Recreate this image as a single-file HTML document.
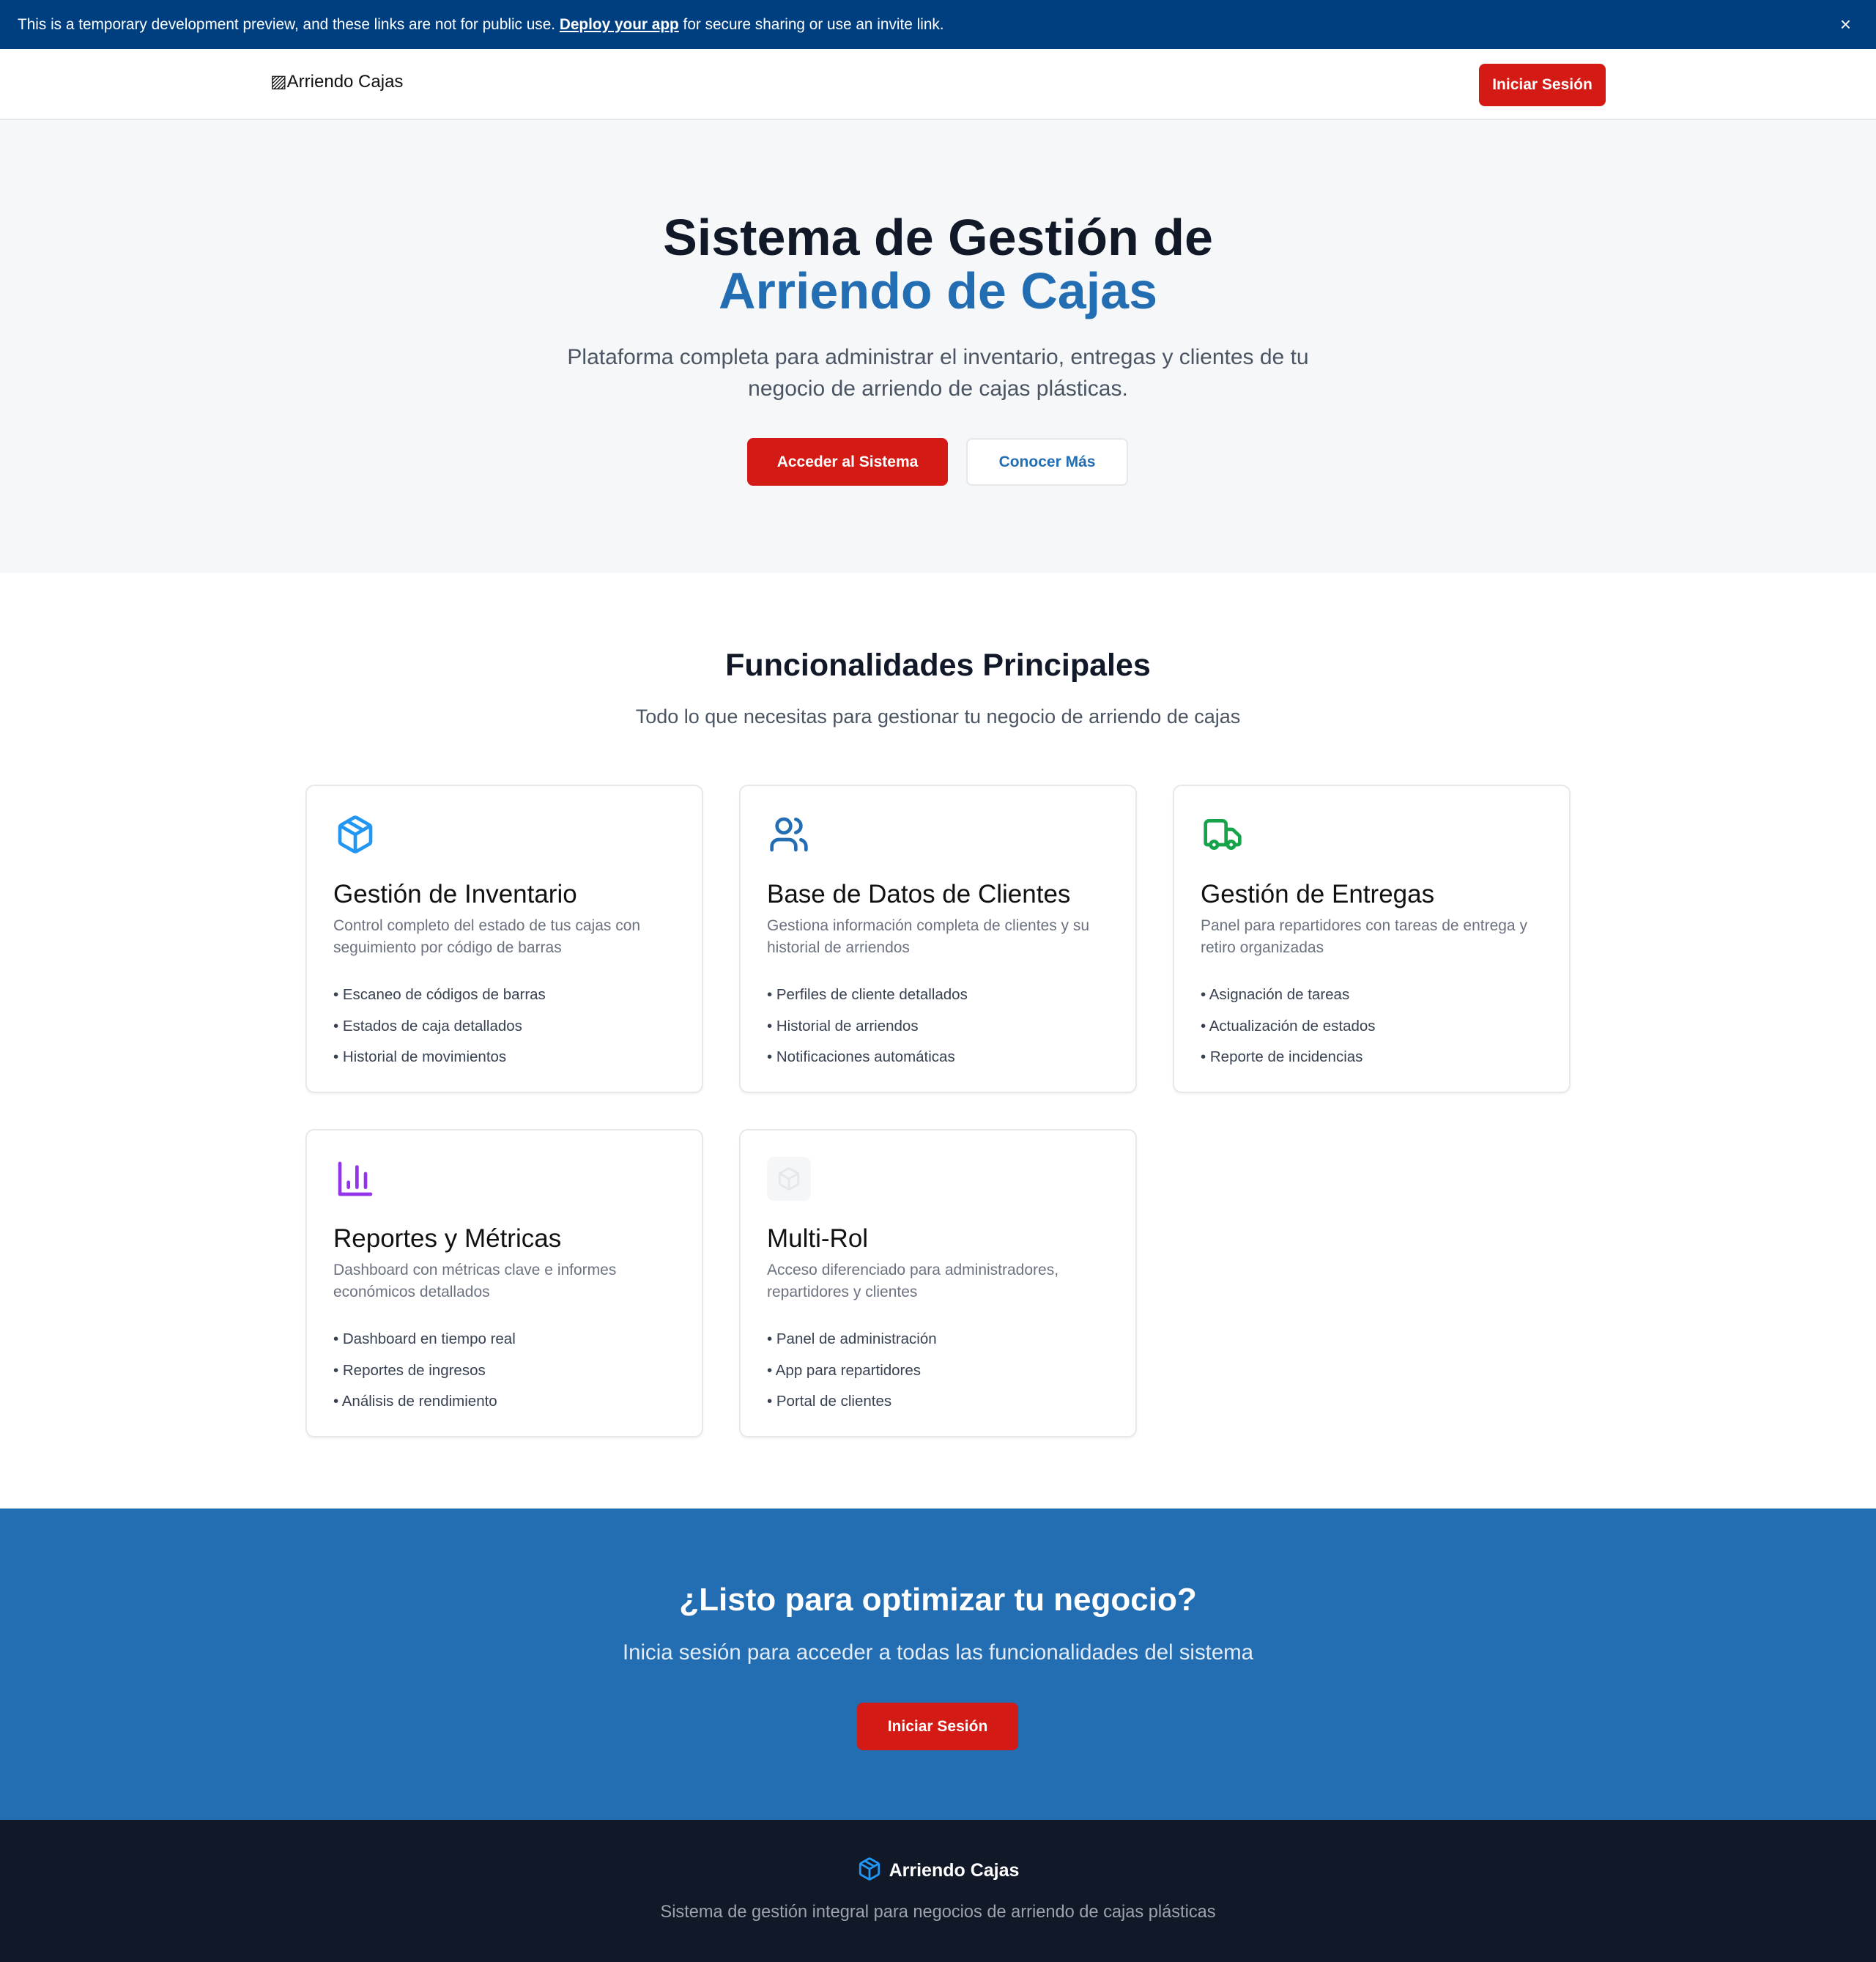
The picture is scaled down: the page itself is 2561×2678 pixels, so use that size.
<!DOCTYPE html>
<html><head><meta charset="utf-8">
<style>
*{box-sizing:border-box;margin:0;padding:0}
body{width:2561px;height:2678px;font-family:"Liberation Sans",sans-serif;background:#fff;color:#111827;position:relative;overflow:hidden}
.abs{position:absolute}
.banner{left:0;top:0;width:2561px;height:67px;background:#003f7f;color:#fff;font-size:20.8px;line-height:67px;padding-left:24px}
.banner u{font-weight:bold}
.nav{left:0;top:67px;width:2561px;height:97px;background:#fff;border-bottom:2px solid #e5e7eb;box-shadow:0 2px 4px rgba(0,0,0,.04)}
.btn{position:absolute;border-radius:8px;display:flex;align-items:center;justify-content:center;font-weight:bold}
.red{background:#d41a14;color:#fff}
.hero{left:0;top:164px;width:2561px;height:618px;background:#f6f7f9}
.c{text-align:center;left:0;width:2561px}
.card{position:absolute;width:543px;height:421px;border:2px solid #e7e8ea;border-radius:12px;box-shadow:0 2px 3px rgba(0,0,0,.05);background:#fff}
.card svg{position:absolute;left:38px;top:38px}
.card h3{position:absolute;left:36px;top:128px;font-size:35px;font-weight:normal;color:#111}
.card p{position:absolute;left:36px;top:176px;width:470px;font-size:21px;line-height:30px;color:#6b7280}
.card ul{position:absolute;left:36px;top:264px;list-style:none;font-size:20.5px;line-height:42.5px;color:#374151}
</style></head><body>
<div class="abs banner">This is a temporary development preview, and these links are not for public use. <u>Deploy your app</u> for secure sharing or use an invite link.<span style="position:absolute;right:34px;top:0;font-size:26px">×</span></div>
<div class="abs nav">
<div style="position:absolute;left:369px;top:30px;font-size:24px;color:#111">▨Arriendo Cajas</div>
<div class="btn red" style="left:2019px;top:20px;width:173px;height:58px;font-size:21px">Iniciar Sesión</div>
</div>
<div class="abs hero">
<div class="abs c" style="top:124px;font-size:70px;font-weight:bold;line-height:73px">Sistema de Gestión de<br><span style="color:#236db3">Arriendo de Cajas</span></div>
<div class="abs c" style="top:302px;font-size:30px;line-height:43px;color:#4b5563">Plataforma completa para administrar el inventario, entregas y clientes de tu<br>negocio de arriendo de cajas plásticas.</div>
<div class="btn red" style="left:1020px;top:434px;width:274px;height:65px;font-size:21px">Acceder al Sistema</div>
<div class="btn" style="left:1319px;top:434px;width:221px;height:65px;font-size:21px;background:#fff;color:#236db3;border:2px solid #e5e7eb">Conocer Más</div>
</div>
<div class="abs c" style="top:884px;font-size:43px;font-weight:bold">Funcionalidades Principales</div>
<div class="abs c" style="top:963px;font-size:27px;color:#4b5563">Todo lo que necesitas para gestionar tu negocio de arriendo de cajas</div>

<div class="card" style="left:417px;top:1071px">
<svg width="56" height="56" viewBox="0 0 24 24" fill="none" stroke="#2196f3" stroke-width="2" stroke-linecap="round" stroke-linejoin="round"><path d="M11 21.73a2 2 0 0 0 2 0l7-4A2 2 0 0 0 21 16V8a2 2 0 0 0-1-1.73l-7-4a2 2 0 0 0-2 0l-7 4A2 2 0 0 0 3 8v8a2 2 0 0 0 1 1.73z"/><path d="M12 22V12"/><path d="M3.29 7 12 12l8.71-5"/><path d="m7.5 4.27 9 5.15"/></svg>
<h3>Gestión de Inventario</h3><p>Control completo del estado de tus cajas con seguimiento por código de barras</p>
<ul><li>• Escaneo de códigos de barras</li><li>• Estados de caja detallados</li><li>• Historial de movimientos</li></ul></div>

<div class="card" style="left:1009px;top:1071px">
<svg width="56" height="56" viewBox="0 0 24 24" fill="none" stroke="#236db3" stroke-width="2" stroke-linecap="round" stroke-linejoin="round"><path d="M16 21v-2a4 4 0 0 0-4-4H6a4 4 0 0 0-4 4v2"/><circle cx="9" cy="7" r="4"/><path d="M22 21v-2a4 4 0 0 0-3-3.87"/><path d="M16 3.13a4 4 0 0 1 0 7.75"/></svg>
<h3>Base de Datos de Clientes</h3><p>Gestiona información completa de clientes y su historial de arriendos</p>
<ul><li>• Perfiles de cliente detallados</li><li>• Historial de arriendos</li><li>• Notificaciones automáticas</li></ul></div>

<div class="card" style="left:1601px;top:1071px">
<svg width="56" height="56" viewBox="0 0 24 24" fill="none" stroke="#16a34a" stroke-width="2" stroke-linecap="round" stroke-linejoin="round"><path d="M14 18V6a2 2 0 0 0-2-2H4a2 2 0 0 0-2 2v11a1 1 0 0 0 1 1h2"/><path d="M15 18H9"/><path d="M19 18h2a1 1 0 0 0 1-1v-3.65a1 1 0 0 0-.22-.62L18.3 9.38a1 1 0 0 0-.78-.38H14"/><circle cx="17" cy="18" r="2"/><circle cx="7" cy="18" r="2"/></svg>
<h3>Gestión de Entregas</h3><p>Panel para repartidores con tareas de entrega y retiro organizadas</p>
<ul><li>• Asignación de tareas</li><li>• Actualización de estados</li><li>• Reporte de incidencias</li></ul></div>

<div class="card" style="left:417px;top:1541px">
<svg width="56" height="56" viewBox="0 0 24 24" fill="none" stroke="#9333ea" stroke-width="2" stroke-linecap="round" stroke-linejoin="round"><path d="M3 3v18h18"/><path d="M18 17V9"/><path d="M13 17V5"/><path d="M8 17v-3"/></svg>
<h3>Reportes y Métricas</h3><p>Dashboard con métricas clave e informes económicos detallados</p>
<ul><li>• Dashboard en tiempo real</li><li>• Reportes de ingresos</li><li>• Análisis de rendimiento</li></ul></div>

<div class="card" style="left:1009px;top:1541px">
<div style="position:absolute;left:36px;top:36px;width:60px;height:60px;border-radius:10px;background:#f5f6f7"></div>
<svg width="34" height="34" viewBox="0 0 24 24" fill="none" stroke="#e5e7eb" stroke-width="2" style="left:49px;top:49px"><path d="M11 21.73a2 2 0 0 0 2 0l7-4A2 2 0 0 0 21 16V8a2 2 0 0 0-1-1.73l-7-4a2 2 0 0 0-2 0l-7 4A2 2 0 0 0 3 8v8a2 2 0 0 0 1 1.73z"/><path d="M12 22V12"/><path d="M3.29 7 12 12l8.71-5"/></svg>
<h3>Multi-Rol</h3><p>Acceso diferenciado para administradores, repartidores y clientes</p>
<ul><li>• Panel de administración</li><li>• App para repartidores</li><li>• Portal de clientes</li></ul></div>

<div class="abs" style="left:0;top:2059px;width:2561px;height:425px;background:#236db3">
<div class="abs c" style="top:100px;font-size:44px;font-weight:bold;color:#fff">¿Listo para optimizar tu negocio?</div>
<div class="abs c" style="top:180px;font-size:29.4px;color:#e0ecf8">Inicia sesión para acceder a todas las funcionalidades del sistema</div>
<div class="btn red" style="left:1170px;top:265px;width:220px;height:65px;font-size:21px">Iniciar Sesión</div>
</div>
<div class="abs" style="left:0;top:2484px;width:2561px;height:194px;background:#111827">
<div class="abs c" style="top:50px;font-size:25px;font-weight:bold;color:#fff"><svg width="34" height="34" viewBox="0 0 24 24" fill="none" stroke="#2196f3" stroke-width="2" stroke-linecap="round" stroke-linejoin="round" style="vertical-align:-7px;margin-right:10px"><path d="M11 21.73a2 2 0 0 0 2 0l7-4A2 2 0 0 0 21 16V8a2 2 0 0 0-1-1.73l-7-4a2 2 0 0 0-2 0l-7 4A2 2 0 0 0 3 8v8a2 2 0 0 0 1 1.73z"/><path d="M12 22V12"/><path d="M3.29 7 12 12l8.71-5"/><path d="m7.5 4.27 9 5.15"/></svg>Arriendo Cajas</div>
<div class="abs c" style="top:113px;font-size:23.6px;color:#9ca3af">Sistema de gestión integral para negocios de arriendo de cajas plásticas</div>
</div>
</body></html>
